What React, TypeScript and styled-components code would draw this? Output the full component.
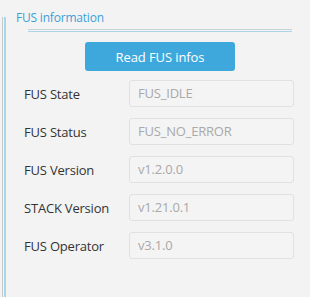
import React from 'react';
import styled, { createGlobalStyle } from 'styled-components';

const GlobalStyle = createGlobalStyle`
  html, body {
    margin: 0;
    padding: 0;
    background: #f3f3f3;
    font-family: 'Open Sans', 'Noto Sans', sans-serif;
  }
`;

const Page = styled.div`
  width: 310px;
  height: 297px;
  padding-top: 17px;
  box-sizing: border-box;
  overflow: hidden;
`;

const Frame = styled.div`
  margin-left: 2px;
  height: 280px;
  border-left: 1px solid #c9c9c9;
  padding-left: 1px;
`;

const Inner = styled.div`
  height: 100%;
  border-left: 2px solid #a6d7ec;
  display: flex;
  flex-direction: column;
`;

const Title = styled.div`
  margin: -8px 0 0 10px;
  height: 18px;
  font-size: 12px;
  letter-spacing: -0.2px;
  line-height: 18px;
  color: #3d9fd9;
`;

const Rule = styled.div`
  margin: 2px 0 0 22px;
  width: 264px;
  height: 1px;
  border-top: 1px solid #c8d3d8;
  border-bottom: 1px solid #a9d6ea;
`;

const Button = styled.button`
  align-self: flex-start;
  margin: 10px 0 0 79px;
  width: 150px;
  height: 29px;
  border: none;
  border-radius: 3px;
  background: #3ea8dc;
  color: #fff;
  font-family: inherit;
  font-size: 13px;
  letter-spacing: -0.1px;
  padding: 0;
`;

const Rows = styled.div`
  margin-top: 9px;
  display: flex;
  flex-direction: column;
  gap: 11px;
`;

const Row = styled.div`
  display: flex;
  align-items: center;
  height: 27px;
`;

const Label = styled.div`
  width: 105px;
  padding-left: 18px;
  font-size: 13px;
  letter-spacing: -0.2px;
  color: #333;
`;

const Field = styled.div`
  width: 165px;
  height: 27px;
  box-sizing: border-box;
  border: 1px solid #e1e1e1;
  border-radius: 3px;
  background: #f4f4f4;
  padding-left: 8px;
  font-size: 13px;
  letter-spacing: -0.2px;
  line-height: 25px;
  color: #a9a9a9;
`;

const rows = [
  { label: 'FUS State', value: 'FUS_IDLE' },
  { label: 'FUS Status', value: 'FUS_NO_ERROR' },
  { label: 'FUS Version', value: 'v1.2.0.0' },
  { label: 'STACK Version', value: 'v1.21.0.1' },
  { label: 'FUS Operator', value: 'v3.1.0' },
];

export default function App() {
  return (
    <Page>
      <GlobalStyle />
      <Frame>
        <Inner>
          <Title>FUS information</Title>
          <Rule />
          <Button>Read FUS infos</Button>
          <Rows>
            {rows.map((r) => (
              <Row key={r.label}>
                <Label>{r.label}</Label>
                <Field>{r.value}</Field>
              </Row>
            ))}
          </Rows>
        </Inner>
      </Frame>
    </Page>
  );
}
